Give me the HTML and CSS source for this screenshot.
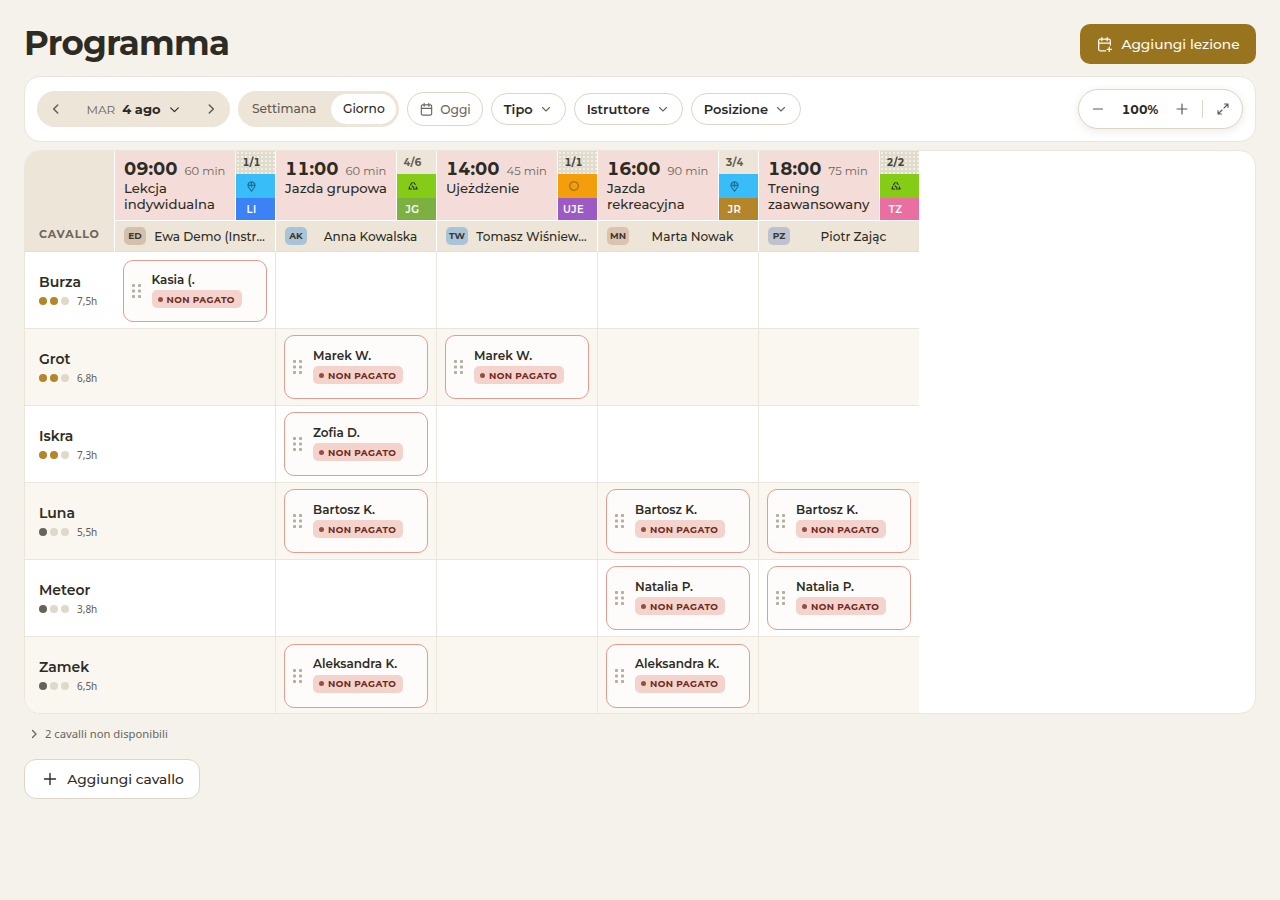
FILE: index.html
```html
<!DOCTYPE html>
<html lang="it">
<head>
    <meta charset="UTF-8">
    <title>Programma</title>
    <link rel="stylesheet" href="styles.css">
</head>
<body>
    <svg class="icon-defs" width="0" height="0">
        <symbol id="i-cal" viewBox="0 0 16 16"><path d="M2.5 4.5a1.5 1.5 0 0 1 1.5-1.5h8a1.5 1.5 0 0 1 1.5 1.5v8a1.5 1.5 0 0 1-1.5 1.5H4a1.5 1.5 0 0 1-1.5-1.5zM2.5 6.8h11M5.5 1.5v3M10.5 1.5v3" fill="none" stroke="currentColor" stroke-width="1.2" stroke-linecap="round"/></symbol>
        <symbol id="i-down" viewBox="0 0 12 12"><path d="M2.5 4.5 6 8l3.5-3.5" fill="none" stroke="currentColor" stroke-width="1.1" stroke-linecap="round" stroke-linejoin="round"/></symbol>
        <symbol id="i-pin" viewBox="0 0 12 12"><path d="M6 11.200 2.900 6.800A3.700 3.700 0 1 1 9.100 6.800zM2.800 4.800h6.400M6 1.500v5.500" fill="none" stroke="currentColor" stroke-width="1.300" stroke-linejoin="round"/></symbol>
        <symbol id="i-group" viewBox="0 0 12 12"><path d="M5 1.800 3 4.600M7 2l1.600 2.200M2 6.800 1.200 9.500H4.500M6.500 9.500H11L9.800 7M5 6l2 2" fill="none" stroke="currentColor" stroke-width="1.300" stroke-linecap="round" stroke-linejoin="round"/></symbol>
        <symbol id="i-ring" viewBox="0 0 12 12"><circle cx="6" cy="6" r="4.300" fill="none" stroke="currentColor" stroke-width="1.1"/></symbol>
        <symbol id="i-grip" viewBox="0 0 9 14"><g fill="currentColor"><rect x="0" y="0" width="3" height="3" rx=".8"/><rect x="6" y="0" width="3" height="3" rx=".8"/><rect x="0" y="5.500" width="3" height="3" rx=".8"/><rect x="6" y="5.500" width="3" height="3" rx=".8"/><rect x="0" y="11" width="3" height="3" rx=".8"/><rect x="6" y="11" width="3" height="3" rx=".8"/></g></symbol>
    </svg>

    <!-- Page header -->
    <header class="page-header">
        <h1 class="page-title">Programma</h1>
        <button class="add-lesson">
            <svg width="17" height="17" viewBox="0 0 16 16" fill="none" stroke="currentColor" stroke-width="1.2" stroke-linecap="round"><path d="M13.500 8.500V4.500A1.500 1.500 0 0 0 12 3H4a1.500 1.500 0 0 0-1.500 1.500v8A1.500 1.500 0 0 0 4 14h5M2.500 6.800h11M5.500 1.500v3M10.500 1.500v3M12.500 10.500v4M10.500 12.500h4"/></svg>
            Aggiungi lezione
        </button>
    </header>

    <!-- Toolbar -->
    <section class="toolbar">
        <div class="date-nav">
            <svg class="nav-arrow" width="14" height="14" viewBox="0 0 12 12"><path d="M7.500 2.500 4 6l3.500 3.500" fill="none" stroke="currentColor" stroke-width="1.200" stroke-linecap="round" stroke-linejoin="round"/></svg>
            <div class="date-label">
                <span class="date-day">MAR</span>
                <span class="date-value">4 ago</span>
                <svg class="date-chevron" width="13" height="13"><use href="#i-down"/></svg>
            </div>
            <svg class="nav-arrow" width="14" height="14" viewBox="0 0 12 12"><path d="M4.500 2.500 8 6l-3.500 3.500" fill="none" stroke="currentColor" stroke-width="1.200" stroke-linecap="round" stroke-linejoin="round"/></svg>
        </div>
        <div class="view-switch">
            <span class="view-option">Settimana</span>
            <span class="view-option active">Giorno</span>
        </div>
        <button class="today-btn"><svg width="15" height="15"><use href="#i-cal"/></svg>Oggi</button>
        <button class="filter-btn">Tipo<svg width="12" height="12"><use href="#i-down"/></svg></button>
        <button class="filter-btn">Istruttore<svg width="12" height="12"><use href="#i-down"/></svg></button>
        <button class="filter-btn">Posizione<svg width="12" height="12"><use href="#i-down"/></svg></button>

        <div class="zoom-control">
            <svg width="14" height="14" viewBox="0 0 14 14"><path d="M2.500 7h9" stroke="currentColor" stroke-width="1.200" stroke-linecap="round"/></svg>
            <span class="zoom-value">100%</span>
            <svg width="14" height="14" viewBox="0 0 14 14"><path d="M2 7h10M7 2v10" stroke="currentColor" stroke-width="1.200" stroke-linecap="round"/></svg>
            <span class="zoom-divider"></span>
            <svg width="14" height="14" viewBox="0 0 14 14" fill="none"><path d="M8 6l4-4M8.500 2H12v3.500M6 8l-4 4M5.500 12H2V8.500" stroke="currentColor" stroke-width="1.100" stroke-linecap="round" stroke-linejoin="round"/></svg>
        </div>
    </section>

    <!-- Schedule -->
    <section class="schedule-card">
        <div class="schedule">
            <div class="corner">CAVALLO</div>

            <div class="lesson-col">
                <div class="lesson">
                    <div class="lesson-info">
                        <div class="lesson-time"><strong>09:00</strong><span>60 min</span></div>
                        <div class="lesson-name">Lekcja indywidualna</div>
                    </div>
                    <div class="lesson-side">
                        <div class="side-count dotted">1/1</div>
                        <div class="side-icon sky"><svg width="11" height="11"><use href="#i-pin"/></svg></div>
                        <div class="side-code blue">LI</div>
                    </div>
                </div>
                <div class="teacher"><span class="avatar tan">ED</span><span class="teacher-name">Ewa Demo (Instr…</span></div>
            </div>

            <div class="lesson-col">
                <div class="lesson">
                    <div class="lesson-info">
                        <div class="lesson-time"><strong>11:00</strong><span>60 min</span></div>
                        <div class="lesson-name">Jazda grupowa</div>
                    </div>
                    <div class="lesson-side">
                        <div class="side-count">4/6</div>
                        <div class="side-icon lime"><svg width="10" height="10"><use href="#i-group"/></svg></div>
                        <div class="side-code moss">JG</div>
                    </div>
                </div>
                <div class="teacher"><span class="avatar steel">AK</span><span class="teacher-name">Anna Kowalska</span></div>
            </div>

            <div class="lesson-col">
                <div class="lesson">
                    <div class="lesson-info">
                        <div class="lesson-time"><strong>14:00</strong><span>45 min</span></div>
                        <div class="lesson-name">Ujeżdżenie</div>
                    </div>
                    <div class="lesson-side">
                        <div class="side-count dotted">1/1</div>
                        <div class="side-icon orange"><svg width="12" height="12"><use href="#i-ring"/></svg></div>
                        <div class="side-code purple">UJE</div>
                    </div>
                </div>
                <div class="teacher"><span class="avatar steel">TW</span><span class="teacher-name">Tomasz Wiśniew…</span></div>
            </div>

            <div class="lesson-col">
                <div class="lesson">
                    <div class="lesson-info">
                        <div class="lesson-time"><strong>16:00</strong><span>90 min</span></div>
                        <div class="lesson-name">Jazda rekreacyjna</div>
                    </div>
                    <div class="lesson-side">
                        <div class="side-count">3/4</div>
                        <div class="side-icon sky"><svg width="11" height="11"><use href="#i-pin"/></svg></div>
                        <div class="side-code bronze">JR</div>
                    </div>
                </div>
                <div class="teacher"><span class="avatar rose">MN</span><span class="teacher-name">Marta Nowak</span></div>
            </div>

            <div class="lesson-col">
                <div class="lesson">
                    <div class="lesson-info">
                        <div class="lesson-time"><strong>18:00</strong><span>75 min</span></div>
                        <div class="lesson-name">Trening zaawansowany</div>
                    </div>
                    <div class="lesson-side">
                        <div class="side-count dotted">2/2</div>
                        <div class="side-icon lime"><svg width="10" height="10"><use href="#i-group"/></svg></div>
                        <div class="side-code pink">TZ</div>
                    </div>
                </div>
                <div class="teacher"><span class="avatar slate">PZ</span><span class="teacher-name">Piotr Zając</span></div>
            </div>

            <!-- Burza -->
            <div class="horse"><div class="horse-name">Burza</div><div class="horse-meta"><i class="dot gold"></i><i class="dot gold"></i><i class="dot pale"></i><span>7,5h</span></div></div>
            <div class="cell first"><div class="booking top"><svg class="grip" width="9" height="14"><use href="#i-grip"/></svg><div><div class="rider">Kasia (.</div><span class="unpaid">NON PAGATO</span></div></div></div>
            <div class="cell"></div>
            <div class="cell"></div>
            <div class="cell"></div>
            <div class="cell"></div>

            <!-- Grot -->
            <div class="horse alt"><div class="horse-name">Grot</div><div class="horse-meta"><i class="dot gold"></i><i class="dot gold"></i><i class="dot pale"></i><span>6,8h</span></div></div>
            <div class="cell first alt"></div>
            <div class="cell alt"><div class="booking"><svg class="grip" width="9" height="14"><use href="#i-grip"/></svg><div><div class="rider">Marek W.</div><span class="unpaid">NON PAGATO</span></div></div></div>
            <div class="cell alt"><div class="booking"><svg class="grip" width="9" height="14"><use href="#i-grip"/></svg><div><div class="rider">Marek W.</div><span class="unpaid">NON PAGATO</span></div></div></div>
            <div class="cell alt"></div>
            <div class="cell alt"></div>

            <!-- Iskra -->
            <div class="horse"><div class="horse-name">Iskra</div><div class="horse-meta"><i class="dot gold"></i><i class="dot gold"></i><i class="dot pale"></i><span>7,3h</span></div></div>
            <div class="cell first"></div>
            <div class="cell"><div class="booking"><svg class="grip" width="9" height="14"><use href="#i-grip"/></svg><div><div class="rider">Zofia D.</div><span class="unpaid">NON PAGATO</span></div></div></div>
            <div class="cell"></div>
            <div class="cell"></div>
            <div class="cell"></div>

            <!-- Luna -->
            <div class="horse alt"><div class="horse-name">Luna</div><div class="horse-meta"><i class="dot dark"></i><i class="dot pale"></i><i class="dot pale"></i><span>5,5h</span></div></div>
            <div class="cell first alt"></div>
            <div class="cell alt"><div class="booking"><svg class="grip" width="9" height="14"><use href="#i-grip"/></svg><div><div class="rider">Bartosz K.</div><span class="unpaid">NON PAGATO</span></div></div></div>
            <div class="cell alt"></div>
            <div class="cell alt"><div class="booking"><svg class="grip" width="9" height="14"><use href="#i-grip"/></svg><div><div class="rider">Bartosz K.</div><span class="unpaid">NON PAGATO</span></div></div></div>
            <div class="cell alt"><div class="booking"><svg class="grip" width="9" height="14"><use href="#i-grip"/></svg><div><div class="rider">Bartosz K.</div><span class="unpaid">NON PAGATO</span></div></div></div>

            <!-- Meteor -->
            <div class="horse"><div class="horse-name">Meteor</div><div class="horse-meta"><i class="dot dark"></i><i class="dot pale"></i><i class="dot pale"></i><span>3,8h</span></div></div>
            <div class="cell first"></div>
            <div class="cell"></div>
            <div class="cell"></div>
            <div class="cell"><div class="booking"><svg class="grip" width="9" height="14"><use href="#i-grip"/></svg><div><div class="rider">Natalia P.</div><span class="unpaid">NON PAGATO</span></div></div></div>
            <div class="cell"><div class="booking"><svg class="grip" width="9" height="14"><use href="#i-grip"/></svg><div><div class="rider">Natalia P.</div><span class="unpaid">NON PAGATO</span></div></div></div>

            <!-- Zamek -->
            <div class="horse alt last"><div class="horse-name">Zamek</div><div class="horse-meta"><i class="dot dark"></i><i class="dot pale"></i><i class="dot pale"></i><span>6,5h</span></div></div>
            <div class="cell first alt last"></div>
            <div class="cell alt last"><div class="booking"><svg class="grip" width="9" height="14"><use href="#i-grip"/></svg><div><div class="rider">Aleksandra K.</div><span class="unpaid">NON PAGATO</span></div></div></div>
            <div class="cell alt last"></div>
            <div class="cell alt last"><div class="booking"><svg class="grip" width="9" height="14"><use href="#i-grip"/></svg><div><div class="rider">Aleksandra K.</div><span class="unpaid">NON PAGATO</span></div></div></div>
            <div class="cell alt last"></div>
        </div>
    </section>

    <!-- Footer actions -->
    <div class="unavailable">
        <svg width="12" height="12" viewBox="0 0 12 12"><path d="M4.500 2.500 8 6l-3.500 3.500" fill="none" stroke="currentColor" stroke-width="1.300" stroke-linecap="round" stroke-linejoin="round"/></svg>
        2 cavalli non disponibili
    </div>
    <button class="add-horse">
        <svg width="16" height="16" viewBox="0 0 16 16"><path d="M2.500 8h11M8 2.500v11" stroke="currentColor" stroke-width="1.400" stroke-linecap="round"/></svg>
        Aggiungi cavallo
    </button>
</body>
</html>
```

FILE: styles.css
```css
/* Page */
body {
    margin: 0;
    padding: 24px 24px 0;
    background-color: #f5f2eb;
    color: #2b2a24;
    font-family: "Montserrat", "Inter", "Noto Sans", sans-serif;
}

button {
    font-family: inherit;
    cursor: pointer;
}

.icon-defs {
    position: absolute;
}

/* Header */
.page-header {
    display: flex;
    justify-content: space-between;
    align-items: center;
    height: 40px;
    margin-bottom: 12px;
}

.page-title {
    margin: 0;
    padding-bottom: 2px;
    font-size: 34px;
    font-weight: 700;
    line-height: 38px;
    letter-spacing: -0.7px;
    color: #2d2c24;
}

.add-lesson {
    display: flex;
    align-items: center;
    gap: 8px;
    width: 176px;
    height: 40px;
    justify-content: center;
    border: none;
    border-radius: 10px;
    background-color: #99741f;
    color: #fdfbf5;
    font-size: 13.750px;
    font-weight: 500;
}

/* Toolbar */
.toolbar {
    display: flex;
    align-items: center;
    gap: 8px;
    height: 66px;
    box-sizing: border-box;
    margin-bottom: 8px;
    padding: 0 12px;
    background-color: #fff;
    border: 1px solid #ebe5da;
    border-radius: 16px;
}

.date-nav {
    display: flex;
    align-items: center;
    justify-content: space-between;
    width: 193px;
    height: 36px;
    box-sizing: border-box;
    padding: 0 12px;
    background-color: #ede5d8;
    border-radius: 18px;
    color: #5f5b50;
}

.date-label {
    display: flex;
    align-items: center;
    gap: 7px;
}

.date-day {
    font-size: 12px;
    color: #6a665b;
}

.date-value {
    font-size: 13px;
    font-weight: 700;
    color: #2b2a24;
}

.date-chevron {
    color: #2b2a24;
}

.view-switch {
    display: flex;
    align-items: center;
    height: 36px;
    box-sizing: border-box;
    padding: 3px;
    background-color: #ede5d8;
    border-radius: 18px;
}

.view-option {
    padding: 0 15px 0 11px;
    font-size: 12.250px;
    font-weight: 500;
    line-height: 30px;
    color: #5f5b50;
}

.view-option.active {
    padding: 0 11.500px;
    background-color: #fff;
    border-radius: 15px;
    color: #2b2a24;
}

.today-btn,
.filter-btn {
    display: flex;
    align-items: center;
    background-color: #fff;
    border: 1px solid #ddd5c5;
    border-radius: 17px;
}

.today-btn {
    gap: 6px;
    height: 34px;
    padding: 0 11px;
    font-size: 12.250px;
    font-weight: 500;
    color: #6a665b;
}

.filter-btn {
    gap: 7px;
    height: 32px;
    padding: 0 13px 0 12px;
    font-size: 13px;
    font-weight: 600;
    color: #2b2a24;
}

.filter-btn svg {
    color: #6a665b;
}

.zoom-control {
    display: flex;
    align-items: center;
    width: 165px;
    height: 40px;
    box-sizing: border-box;
    margin-left: auto;
    padding: 0 12px;
    background-color: #fff;
    border: 1px solid #ddd5c5;
    border-radius: 20px;
    box-shadow: 0 2px 8px rgba(90, 75, 40, 0.12);
    color: #5f5b50;
}

.zoom-value {
    width: 70px;
    text-align: center;
    font-size: 12.250px;
    font-weight: 700;
    font-variant-numeric: tabular-nums;
    color: #2b2a24;
}

.zoom-divider {
    width: 1px;
    height: 18px;
    margin: 0 13px;
    background-color: #ddd5c5;
}

/* Schedule grid */
.schedule-card {
    height: 564px;
    box-sizing: border-box;
    background-color: #fff;
    border: 1px solid #ebe5da;
    border-radius: 16px;
    overflow: hidden;
}

.schedule {
    display: grid;
    grid-template-columns: 89px repeat(5, 161px);
    grid-template-rows: 101px repeat(6, 77px);
    width: 894px;
}

.corner {
    display: flex;
    align-items: flex-end;
    box-sizing: border-box;
    padding: 0 0 10px 14px;
    background-color: #ede5d8;
    border-bottom: 1px solid #e5ddcf;
    font-size: 11px;
    font-weight: 700;
    letter-spacing: 0.9px;
    color: #6a665b;
}

.lesson-col {
    display: flex;
    flex-direction: column;
    box-sizing: border-box;
    border-left: 1px solid #fff;
}

.lesson {
    display: flex;
    height: 69px;
    border-bottom: 1px solid #fff;
    background-color: #f4dcd8;
}

.lesson-info {
    flex: 1;
    min-width: 0;
    padding: 7px 9px 6px;
}

.lesson-time {
    display: flex;
    align-items: baseline;
    gap: 7px;
    font-size: 11.500px;
    white-space: nowrap;
    color: #6a665b;
}

.lesson-time strong {
    font-size: 17.500px;
    font-weight: 700;
    font-variant-numeric: tabular-nums;
    color: #2d2c24;
}

.lesson-name {
    margin-top: 1px;
    font-size: 13.200px;
    font-weight: 500;
    line-height: 16px;
    color: #2d2c24;
}

.lesson-side {
    display: flex;
    flex-direction: column;
    flex: none;
    width: 39px;
    border-left: 1px solid #fff;
}

.side-count,
.side-icon,
.side-code {
    display: flex;
    align-items: center;
    justify-content: center;
    padding-right: 8px;
}

.side-count {
    height: 23px;
    background-color: #ede5d8;
    font-size: 10px;
    font-weight: 700;
    font-variant-numeric: tabular-nums;
    color: #5f5b50;
}

.side-count.dotted {
    background-color: #e0dccd;
    background-image: radial-gradient(#f3f0e6 0.7px, transparent 0.8px);
    background-size: 4px 4px;
    color: #45433a;
}

.side-icon {
    height: 24px;
    color: #2b2a24;
}

.side-code {
    flex: 1;
    font-size: 10px;
    font-weight: 600;
    letter-spacing: 0.4px;
    color: #fff;
}

.sky { background-color: #38bdf8; color: #1c6f96; }
.lime { background-color: #84cc16; }
.orange { background-color: #f59e0b; color: #8a6a1c; }
.blue { background-color: #3b82f6; }
.moss { background-color: #7cb142; }
.purple { background-color: #9c5bc4; }
.bronze { background-color: #b5852a; }
.pink { background-color: #e86fa0; }

.teacher {
    display: flex;
    align-items: center;
    flex: 1;
    gap: 7px;
    padding: 0 9px;
    background-color: #ede5d8;
    border-bottom: 1px solid #e5ddcf;
}

.avatar {
    flex: none;
    width: 22px;
    height: 18px;
    border-radius: 5px;
    font-size: 9px;
    font-weight: 700;
    line-height: 18px;
    text-align: center;
    color: #3a382f;
}

.tan { background-color: #d3c1ac; }
.steel { background-color: #a9c4d8; }
.rose { background-color: #dcc3b0; }
.slate { background-color: #bcc3cf; }

.teacher-name {
    flex: 1;
    min-width: 0;
    font-size: 12.100px;
    font-weight: 500;
    text-align: center;
    white-space: nowrap;
    color: #2d2c24;
}

/* Rows */
.horse,
.cell {
    box-sizing: border-box;
    border-bottom: 1px solid #ebe5da;
}

.horse {
    padding: 21px 0 0 14px;
}

.cell {
    display: flex;
    align-items: center;
    justify-content: center;
    border-left: 1px solid #ebe5da;
}

.cell.first {
    border-left: none;
}

.alt {
    background-color: #faf6f0;
}

.last {
    border-bottom: none;
}

.horse-name {
    font-size: 14px;
    font-weight: 600;
    color: #2d2c24;
}

.horse-meta {
    display: flex;
    align-items: center;
    gap: 3px;
    margin-top: 3px;
}

.horse-meta span {
    margin-left: 5px;
    font-family: "Noto Sans", sans-serif;
    font-size: 10px;
    color: #5f5b50;
}

.dot {
    width: 8px;
    height: 8px;
    border-radius: 50%;
}

.gold { background-color: #b5852a; }
.dark { background-color: #67635a; }
.pale { background-color: #ded9c9; }

.booking {
    display: flex;
    align-items: center;
    gap: 11px;
    width: 144px;
    height: 64px;
    box-sizing: border-box;
    padding: 0 8px 2px;
    background-color: #fefcfa;
    border: 1px solid #e39c90;
    border-radius: 10px;
}

.booking.top {
    height: 62px;
    margin-top: 2px;
}

.grip {
    flex: none;
    margin-top: 2px;
    color: #b5afa2;
}

.rider {
    font-size: 12px;
    font-weight: 600;
    color: #2d2c24;
}

.unpaid {
    display: inline-flex;
    align-items: center;
    gap: 4px;
    height: 18px;
    padding: 0 7px 0 6px;
    background-color: #f4d3cd;
    border-radius: 5px;
    font-size: 9px;
    font-weight: 700;
    letter-spacing: 0.4px;
    color: #6f2a20;
}

.unpaid::before {
    content: "";
    width: 5px;
    height: 5px;
    border-radius: 50%;
    background-color: #8f5048;
}

/* Footer */
.unavailable {
    display: flex;
    align-items: center;
    gap: 5px;
    margin: 12px 0 18px 4px;
    font-family: "Noto Sans", sans-serif;
    font-size: 11.250px;
    line-height: 15px;
    color: #6a665b;
}

.add-horse {
    display: flex;
    align-items: center;
    justify-content: center;
    gap: 9px;
    width: 176px;
    height: 40px;
    padding-left: 8px;
    background-color: #fff;
    border: 1px solid #ddd5c5;
    border-radius: 12px;
    font-size: 13.750px;
    font-weight: 500;
    color: #2d2c24;
}
```
